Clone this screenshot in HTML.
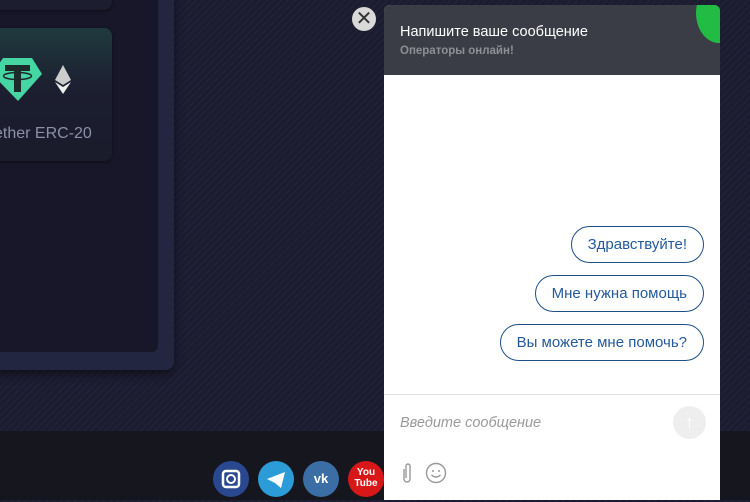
<!DOCTYPE html>
<html><head><meta charset="utf-8"><style>
*{margin:0;padding:0;box-sizing:border-box}
body{width:750px;height:500px;overflow:hidden;position:relative;font-family:"Liberation Sans",sans-serif;
background:repeating-linear-gradient(135deg,#1c1c30 0 3px,#202036 3px 5px);}
.foot{position:absolute;left:0;top:431px;width:750px;height:69px;background:#16161f}
.outer{position:absolute;left:-20px;top:-20px;width:194px;height:390px;background:#222640;border-radius:8px;box-shadow:0 4px 10px rgba(0,0,0,.5)}
.inner{position:absolute;left:-20px;top:-20px;width:178px;height:372px;background:#171729;border-radius:6px}
.card{position:absolute;left:-20px;top:28px;width:132px;height:133px;border-radius:8px;background:linear-gradient(180deg,#1f3a3e 0,#1c1f30 45%,#1a1b2b);box-shadow:0 1px 3px rgba(0,0,0,.5)}
.card0{position:absolute;left:-20px;top:-20px;width:132px;height:30px;border-radius:8px;background:#1c1d2e;box-shadow:0 1px 3px rgba(0,0,0,.5)}
.erc{position:absolute;top:97px;font-size:16px;color:#8d90a6;white-space:nowrap}
.x{position:absolute;left:352px;top:7px;width:24px;height:24px;border-radius:50%;background:#d9d9d9;color:#333;font-size:20px;line-height:24px;text-align:center}
.chat{position:absolute;left:384px;top:5px;width:336px;height:495px;background:#fff;border-radius:6px 6px 0 0;overflow:hidden}
.hd{height:70px;background:#3a3d45;position:relative}
.t1{position:absolute;left:16px;top:19px;color:#fff;font-size:14.5px}
.t2{position:absolute;left:16px;top:40px;color:#8e9096;font-size:11.5px;font-weight:bold}
.gr{position:absolute;right:-22px;top:-22px;width:46px;height:60px;border-radius:50%;background:#22bb44}
.b{position:absolute;right:16px;height:37px;border:1.3px solid #1f4f87;border-radius:19px;color:#245a9c;font-size:15px;line-height:35px;padding:0 16px;white-space:nowrap}
.div{position:absolute;left:0;top:389px;width:336px;height:1px;background:#e2e2e2}
.ph{position:absolute;left:16px;top:410px;color:#999;font-style:italic;font-size:14.5px}
.send{position:absolute;left:289px;top:401px;width:33px;height:33px;border-radius:50%;background:#eee;color:#fff;text-align:center;line-height:33px;font-size:18px}
.soc{position:absolute;top:461px;width:36px;height:36px;border-radius:50%}
</style></head><body>
<div class="foot"></div>
<div class="outer"></div><div class="inner"></div>
<div class="card0"></div>
<div class="card">
<svg style="position:absolute;left:14px;top:28px" width="90" height="50" viewBox="0 0 90 50">
<polygon points="9,2 38,2 48,18 24,45 -2,18" fill="#45d6a3"/>
<rect x="11" y="9" width="25" height="6" fill="#1d2a2c"/><rect x="20" y="9" width="7" height="27" fill="#1d2a2c"/>
<ellipse cx="23.5" cy="20" rx="14" ry="3.5" fill="none" stroke="#1d2a2c" stroke-width="1.5"/>
<polygon points="69,9 77,24 69,29 61,24" fill="#ccc"/><polygon points="69,31 77,26 69,38 61,26" fill="#eee"/>
</svg>
<div class="erc" style="left:6px">Tether ERC-20</div>
</div>
<div class="x">✕</div>
<div class="soc" style="left:213px;background:#2a4890"><svg width="36" height="36"><rect x="10" y="10" width="16" height="16" rx="3" fill="none" stroke="#fff" stroke-width="2.5"/><circle cx="18" cy="18" r="4" fill="none" stroke="#fff" stroke-width="2"/></svg></div>
<div class="soc" style="left:258px;background:#2b9cd8"><svg width="36" height="36"><path d="M9 18 L27 11 L23 27 L17 22 Z" fill="#fff"/></svg></div>
<div class="soc" style="left:303px;background:#3b6ea5;color:#fff;font-weight:bold;font-size:13px;text-align:center;line-height:36px">vk</div>
<div class="soc" style="left:348px;background:#d81818;color:#fff;font-size:10px;text-align:center;line-height:11px;padding-top:6px;font-weight:bold">You<br>Tube</div>
<div class="chat">
<div class="hd"><div class="t1">Напишите ваше сообщение</div><div class="t2">Операторы онлайн!</div><div class="gr"></div></div>
<div class="b" style="top:221px">Здравствуйте!</div>
<div class="b" style="top:270px">Мне нужна помощь</div>
<div class="b" style="top:319px">Вы можете мне помочь?</div>
<div class="div"></div>
<div class="ph">Введите сообщение</div>
<div class="send">↑</div>
<svg style="position:absolute;left:14px;top:456px" width="60" height="24"><path d="M6 8 V18 a3 3 0 0 0 6 0 V5 a2 2 0 0 0 -4 0 V17" fill="none" stroke="#999" stroke-width="1.4"/><circle cx="38" cy="12" r="9.5" fill="none" stroke="#999" stroke-width="1.4"/><circle cx="35" cy="10" r="1" fill="#999"/><circle cx="41" cy="10" r="1" fill="#999"/><path d="M33.5 14 q4.5 4 9 0" fill="none" stroke="#999" stroke-width="1.4"/></svg>
</div>
</body></html>
